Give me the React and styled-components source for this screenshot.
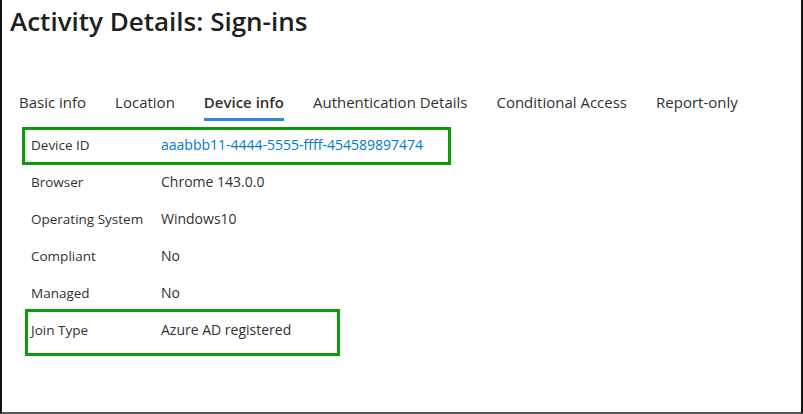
import React from "react";
import styled, { createGlobalStyle } from "styled-components";

const Global = createGlobalStyle`
  html, body { margin: 0; padding: 0; background: #fff; }
  body { font-family: "Open Sans", "Noto Sans", sans-serif; color: #323130; }
`;

const Frame = styled.div`
  position: relative;
  box-sizing: border-box;
  width: 803px;
  height: 414px;
  border-left: 2px solid #111;
  border-right: 2px solid #111;
  border-bottom: 2px solid #555;
  border-top: none;
  background: #fff;
  padding: 5px 0 0 8px;
  overflow: hidden;
`;

const Title = styled.h1`
  margin: 0;
  font-size: 26px;
  font-weight: 600;
  line-height: 32px;
  color: #201f1e;
`;

const Tabs = styled.nav`
  display: flex;
  gap: 29px;
  margin: 55px 0 0 9px;
`;

const Tab = styled.div`
  font-size: 15px;
  line-height: 20px;
  padding-bottom: 6px;
  color: #323130;
  font-weight: ${(p) => (p.$active ? 600 : 400)};
  border-bottom: 3px solid ${(p) => (p.$active ? "#2b88d8" : "transparent")};
`;

const Rows = styled.div`
  display: grid;
  grid-template-columns: 130px 1fr;
  grid-auto-rows: 37px;
  margin: 5px 0 0 21px;
  align-items: center;
`;

const Label = styled.div`
  font-size: 13.5px;
  color: #323130;
`;

const Value = styled.div`
  font-size: 14px;
  color: ${(p) => (p.$link ? "#0078d4" : "#323130")};
`;

const Highlight = styled.div`
  position: absolute;
  box-sizing: border-box;
  border: 3px solid #0a9a0a;
  pointer-events: none;
`;

const rows = [
  ["Device ID", "aaabbb11-4444-5555-ffff-454589897474", true],
  ["Browser", "Chrome 143.0.0"],
  ["Operating System", "Windows10"],
  ["Compliant", "No"],
  ["Managed", "No"],
  ["Join Type", "Azure AD registered"],
];

const tabs = [
  "Basic info",
  "Location",
  "Device info",
  "Authentication Details",
  "Conditional Access",
  "Report-only",
];

export default function App() {
  return (
    <>
      <Global />
      <Frame>
        <Title>Activity Details: Sign-ins</Title>
        <Tabs>
          {tabs.map((t) => (
            <Tab key={t} $active={t === "Device info"}>
              {t}
            </Tab>
          ))}
        </Tabs>
        <Rows>
          {rows.map(([l, v, link]) => (
            <React.Fragment key={l}>
              <Label>{l}</Label>
              <Value $link={link}>{v}</Value>
            </React.Fragment>
          ))}
        </Rows>
        <Highlight style={{ left: 20, top: 127, width: 429, height: 38 }} />
        <Highlight style={{ left: 23, top: 309, width: 315, height: 47 }} />
      </Frame>
    </>
  );
}
